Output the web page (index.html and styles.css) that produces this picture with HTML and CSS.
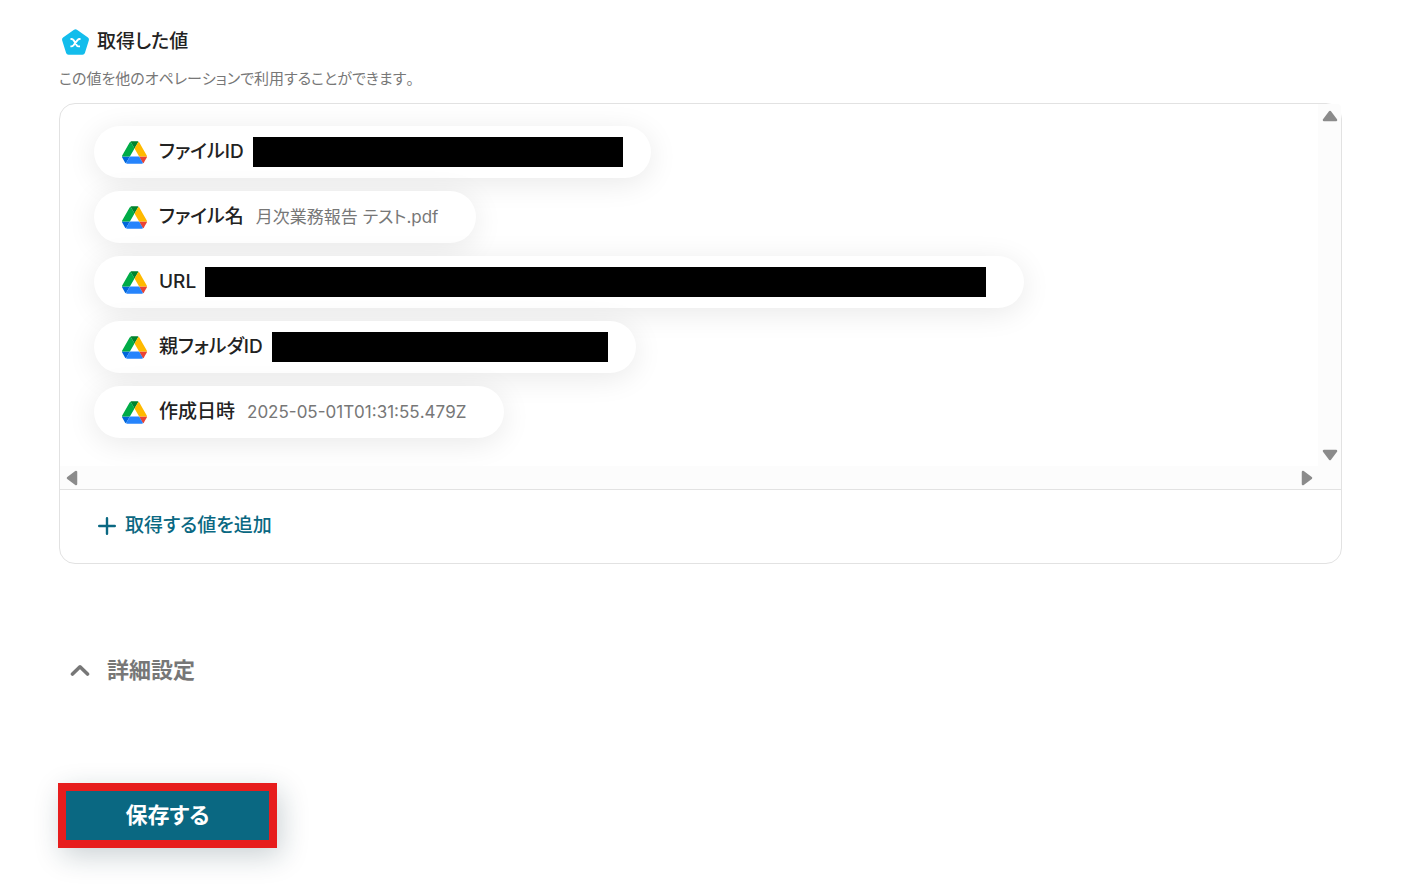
FILE: index.html
```
<!DOCTYPE html>
<html lang="ja">
<head>
  <meta charset="UTF-8" />
  <meta name="viewport" content="width=device-width, initial-scale=1.0"/>
  <title>取得した値</title>
  <link rel="stylesheet" href="styles.css">
</head>
<body>
  <!-- Google Drive icon, reused by every row -->
  <svg class="sprite" aria-hidden="true">
    <symbol id="drive" viewBox="0 0 87.3 78">
      <path fill="#0066da" d="m6.6 66.85 3.85 6.65c.8 1.4 1.95 2.5 3.3 3.3l13.75-23.8h-27.5c0 1.55.4 3.1 1.2 4.5z"/>
      <path fill="#00ac47" d="m43.65 25-13.75-23.8c-1.35.8-2.5 1.9-3.3 3.3l-25.4 44a9.06 9.06 0 0 0 -1.2 4.5h27.5z"/>
      <path fill="#ea4335" d="m73.55 76.8c1.35-.8 2.5-1.9 3.3-3.3l1.6-2.75 7.65-13.25c.8-1.4 1.2-2.95 1.2-4.5h-27.502l5.852 11.5z"/>
      <path fill="#00832d" d="m43.65 25 13.75-23.8c-1.35-.8-2.9-1.2-4.5-1.2h-18.5c-1.6 0-3.15.45-4.5 1.2z"/>
      <path fill="#2684fc" d="m59.8 53h-32.3l-13.75 23.8c1.35.8 2.9 1.2 4.5 1.2h50.8c1.6 0 3.15-.45 4.5-1.2z"/>
      <path fill="#ffba00" d="m73.4 26.5-12.7-22c-.8-1.4-1.95-2.5-3.3-3.3l-13.75 23.8 16.15 28h27.45c0-1.55-.4-3.1-1.2-4.5z"/>
    </symbol>
  </svg>

  <main class="page">
    <section>
      <h2 class="title">
        <svg class="title-icon" viewBox="0 0 28 28" aria-hidden="true">
          <path d="M14 3.7 25 11.6 21 24.3H7L3 11.6Z" fill="#13bdec" stroke="#13bdec" stroke-width="5" stroke-linejoin="round"/>
          <path d="M9 11h1c1 0 1.6.4 2 1.1l3.2 5.2c.4.8 1 1.1 1.9 1.1h1.4M19 11h-.9c-.9 0-1.5.4-2.1 1.1l-4.1 5.2c-.6.7-1.2 1.1-2.1 1.1h-.9" fill="none" stroke="#fff" stroke-width="1.9"/>
        </svg>
        取得した値
      </h2>
      <p class="description">この値を他のオペレーションで利用することができます。</p>

      <div class="panel">
        <div class="scroll-area">
          <ul class="values">
            <li class="value">
              <svg class="drive"><use href="#drive"/></svg>
              <span class="name">ファイルID</span>
              <span class="masked file-id"></span>
            </li>
            <li class="value">
              <svg class="drive"><use href="#drive"/></svg>
              <span class="name">ファイル名</span>
              <span class="data">月次業務報告 テスト.pdf</span>
            </li>
            <li class="value">
              <svg class="drive"><use href="#drive"/></svg>
              <span class="name">URL</span>
              <span class="masked url"></span>
            </li>
            <li class="value">
              <svg class="drive"><use href="#drive"/></svg>
              <span class="name">親フォルダID</span>
              <span class="masked folder-id"></span>
            </li>
            <li class="value">
              <svg class="drive"><use href="#drive"/></svg>
              <span class="name">作成日時</span>
              <span class="data">2025-05-01T01:31:55.479Z</span>
            </li>
          </ul>
          <div class="bar bar-y">
            <svg class="arrow" viewBox="0 0 16 12"><path d="M8 2 14 10H2Z"/></svg>
            <svg class="arrow" viewBox="0 0 16 12"><path d="M8 10 2 2H14Z"/></svg>
          </div>
          <div class="bar bar-x">
            <svg class="arrow-side" viewBox="0 0 12 16"><path d="M2 8 10 2V14Z"/></svg>
            <svg class="arrow-side" viewBox="0 0 12 16"><path d="M10 8 2 14V2Z"/></svg>
          </div>
        </div>
        <div class="panel-footer">
          <button type="button" class="add-button">
            <svg class="plus" viewBox="0 0 18 18" aria-hidden="true"><path d="M9 1.2v15.6M1.2 9h15.6"/></svg>
            取得する値を追加
          </button>
        </div>
      </div>
    </section>

    <button type="button" class="details-button">
      <svg class="chevron" viewBox="0 0 20 12" aria-hidden="true"><path d="M2.5 10 10 2.8 17.5 10"/></svg>
      詳細設定
    </button>

    <button type="button" class="save-button">保存する</button>
  </main>
</body>
</html>
```
FILE: styles.css
```
* {
  box-sizing: border-box;
}

body {
  margin: 0;
  background-color: #fff;
  color: #222;
  font-family: Inter, "Noto Sans CJK JP", sans-serif;
  font-feature-settings: "palt";
  font-kerning: none;
}

button {
  border: none;
  background: none;
  padding: 0;
  font-family: inherit;
  font-feature-settings: inherit;
  font-kerning: inherit;
  cursor: pointer;
}

.sprite {
  display: none;
}

.page {
  padding: 26px 59px 40px;
  display: flex;
  flex-direction: column;
}

.title {
  display: flex;
  align-items: center;
  gap: 7px;
  margin: 0;
  padding-left: 2px;
  font-size: 19px;
  line-height: 32px;
  font-weight: 500;
}

.title-icon {
  width: 29px;
  height: 28px;
}

.description {
  margin: 9px 0 12px;
  color: #777;
  font-size: 15px;
  line-height: 24px;
}

.panel {
  border: 1px solid #e2e2e2;
  border-radius: 16px;
}

/* list with its two scrollbars */
.scroll-area {
  display: grid;
  grid-template-columns: minmax(0, 1fr) 23px;
  border-bottom: 1px solid #e2e2e2;
}

.values {
  display: flex;
  flex-direction: column;
  align-items: flex-start;
  gap: 13px;
  margin: 0;
  padding: 22px 34px 28px;
  list-style: none;
  overflow: hidden;
  border-radius: 16px 0 0 0;
}

.value {
  display: flex;
  align-items: center;
  height: 52px;
  padding: 0 38px 0 28px;
  border-radius: 26px;
  background-color: #fff;
  box-shadow: 0 5px 30px rgba(0, 0, 0, 0.09);
  white-space: nowrap;
}

.drive {
  width: 25px;
  height: 23px;
  margin-right: 12px;
}

.name {
  font-size: 19px;
  line-height: 28px;
  font-weight: 500;
}

.data {
  margin-left: 12px;
  color: #777;
  font-size: 17px;
  line-height: 24px;
}

.masked {
  height: 30px;
  margin-left: 9px;
  background-color: #000;
}

.file-id {
  width: 370px;
  margin-right: -10px;
}

.url {
  width: 781px;
}

.folder-id {
  width: 336px;
  margin-right: -10px;
}

.bar {
  display: flex;
  justify-content: space-between;
  align-items: center;
  background-color: #fcfcfc;
}

.bar-y {
  flex-direction: column;
  padding: 6px 0 5px;
  border-top-right-radius: 4px;
}

.bar-x {
  grid-column: 1 / -1;
  height: 23px;
  padding: 0 28px 0 6px;
}

.arrow {
  width: 16px;
  height: 12px;
}

.arrow-side {
  width: 12px;
  height: 16px;
}

.arrow path,
.arrow-side path {
  fill: #8b8b8b;
  stroke: #8b8b8b;
  stroke-width: 2.5;
  stroke-linejoin: round;
}

.panel-footer {
  padding: 20px 38px 21px;
}

.add-button {
  display: flex;
  align-items: center;
  gap: 9px;
  color: #0a6882;
  font-size: 19px;
  line-height: 32px;
  font-weight: 500;
}

.plus {
  width: 18px;
  height: 18px;
  fill: none;
  stroke: #0a6882;
  stroke-width: 2.4;
  stroke-linecap: round;
}

.details-button {
  display: flex;
  align-items: center;
  align-self: flex-start;
  gap: 17px;
  margin-top: 90px;
  padding-left: 11px;
  color: #777;
  font-size: 22px;
  line-height: 32px;
  font-weight: 600;
}

.chevron {
  width: 20px;
  height: 12px;
  fill: none;
  stroke: #777;
  stroke-width: 3.6;
  stroke-linecap: round;
  stroke-linejoin: round;
}

.save-button {
  align-self: flex-start;
  width: 219px;
  height: 65px;
  margin: 97px 0 0 -1px;
  padding-bottom: 2px;
  border: 8px solid #e71d1d;
  background-color: #0a6882;
  box-shadow: 4px 8px 28px rgba(20, 50, 65, 0.22);
  color: #fff;
  font-size: 22px;
  line-height: 32px;
  font-weight: 700;
}
```
